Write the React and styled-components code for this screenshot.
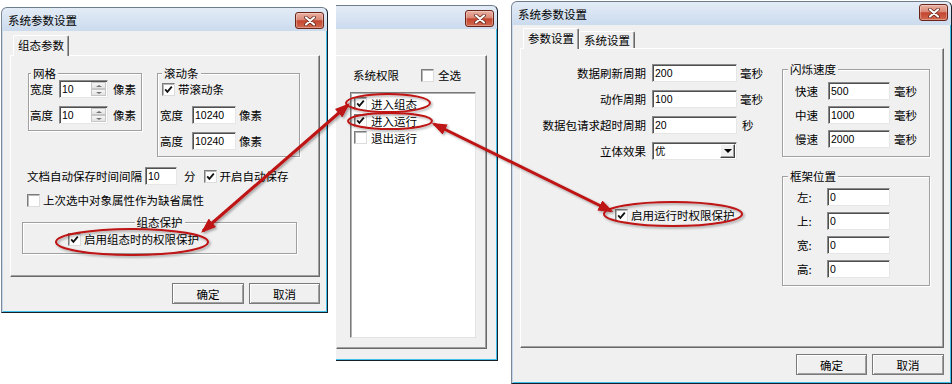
import React from 'react';
import styled, { createGlobalStyle } from 'styled-components';

const GlobalStyle = createGlobalStyle`
  html, body { margin: 0; padding: 0; background: #fff; }
  body {
    font-family: "Noto Sans CJK SC", "Liberation Sans", sans-serif;
    font-size: 11.5px;
    line-height: 18px;
    color: #000;
  }
`;

const Desktop = styled.div`
  position: relative;
  width: 952px;
  height: 384px;
  overflow: hidden;
  display: flex;
  align-items: flex-start;
`;

const Win = styled.div`
  box-sizing: border-box;
  flex: none;
  width: ${p => p.$w}px;
  height: ${p => p.$h}px;
  margin: ${p => p.$top}px 0 0 ${p => p.$left}px;
  display: flex;
  flex-direction: column;
  border: 1px solid #16202a;
  border-top-color: #6e7d8d;
  border-left: ${p => (p.$cut ? 'none' : '1px solid #7d8996')};
  border-radius: ${p => (p.$cut ? '0 6px 0 0' : '6px 6px 0 0')};
  padding-left: ${p => (p.$cut ? 0 : 1)}px;
  background: linear-gradient(#e3ecf6, #cbdbee 23px, #c4d6eb);
`;

const TitleBar = styled.div`
  height: 23px;
  flex: none;
  display: flex;
  align-items: flex-start;
  justify-content: space-between;
  padding: 0 3px 0 5px;
`;

const Title = styled.span`
  margin-top: 4px;
  line-height: 16px;
  white-space: nowrap;
`;

const CloseBtn = styled.div`
  box-sizing: border-box;
  width: 29px;
  height: 17px;
  margin-top: ${p => p.$mt ?? 2}px;
  margin-left: auto;
  border: 1px solid #6a2317;
  border-radius: 3px;
  background: linear-gradient(#eab0a3, #d98a78 45%, #c4452f 52%, #d16a50);
  box-shadow: inset 0 0 0 1px rgba(255, 255, 255, 0.3);
  display: flex;
  align-items: center;
  justify-content: center;
`;

const Body = styled.div`
  flex: 1;
  display: flex;
  flex-direction: column;
  background: #f0f0f0;
  border-right: 1px solid #3fbfea;
  border-bottom: 1px solid #3fbfea;
  padding: ${p => p.$pad};
`;

const Tabs = styled.div`
  height: 20px;
  display: flex;
  align-items: flex-end;
  margin-left: 3px;
  position: relative;
  z-index: 1;
`;

const Tab = styled.div`
  box-sizing: border-box;
  height: ${p => (p.$active ? 21 : 17)}px;
  margin-bottom: ${p => (p.$active ? -1 : 0)}px;
  padding: 0 4px;
  line-height: ${p => (p.$active ? 19 : 16)}px;
  background: #f0f0f0;
  border: 1px solid;
  border-color: #fff #696969 transparent #fff;
  border-bottom: none;
  border-radius: 2px 2px 0 0;
  box-shadow: inset -1px 0 0 #a0a0a0;
  white-space: nowrap;
`;

const Panel = styled.div`
  box-sizing: border-box;
  height: ${p => p.$h}px;
  flex: none;
  display: flex;
  flex-direction: ${p => p.$row ? 'row' : 'column'};
  align-items: flex-start;
  border: 1px solid;
  border-color: #fff #696969 #696969 ${p => (p.$cut ? 'transparent' : '#fff')};
  box-shadow: inset -1px -1px 0 #a0a0a0;
`;

const ButtonRow = styled.div`
  display: flex;
  justify-content: flex-end;
  gap: 5px;
  margin-top: 6px;
`;

const Button = styled.div`
  box-sizing: border-box;
  width: ${p => p.$w}px;
  height: 21px;
  border: 1px solid #7a7a7a;
  box-shadow: inset 1px 1px 0 #fff, inset -1px -1px 0 #a0a0a0;
  background: #f0f0f0;
  display: flex;
  align-items: center;
  justify-content: center;
  line-height: 16px;
`;

const GroupBox = styled.div`
  box-sizing: border-box;
  position: relative;
  flex: none;
  width: ${p => p.$w}px;
  margin: ${p => p.$m || 0};
  padding: ${p => p.$pad};
  border: 1px solid #a0a0a0;
  box-shadow: inset 1px 1px 0 #fff, 1px 1px 0 #fff;
  display: flex;
  flex-direction: column;
  gap: ${p => p.$gap || 0}px;
`;

const Caption = styled.span`
  position: absolute;
  top: -9px;
  left: ${p => (p.$center ? '50%' : `${p.$left ?? 2}px`)};
  transform: ${p => (p.$center ? 'translateX(-50%)' : 'none')};
  padding: 0 2px;
  line-height: 16px;
  background: #f0f0f0;
  white-space: nowrap;
`;

const Row = styled.div`
  display: flex;
  align-items: center;
  height: ${p => p.$h || 18}px;
  margin: ${p => p.$m || 0};
  white-space: nowrap;
`;

const Label = styled.span`
  flex: none;
  width: ${p => (p.$w ? `${p.$w}px` : 'auto')};
  margin-left: ${p => p.$ml || 0}px;
  text-align: ${p => p.$align || 'left'};
  white-space: nowrap;
`;

const Field = styled.div`
  box-sizing: border-box;
  flex: none;
  width: ${p => p.$w}px;
  height: 18px;
  margin-left: ${p => p.$ml || 0}px;
  display: flex;
  align-items: center;
  justify-content: space-between;
  padding-left: 2px;
  background: #fff;
  border: 1px solid;
  border-color: #8a8a8a #e6e6e6 #e6e6e6 #8a8a8a;
  box-shadow: inset 1px 1px 0 #505050;
  font-family: "Liberation Sans", "Noto Sans CJK SC", sans-serif;
  font-size: 10.5px;
`;

const Spinner = styled.div`
  width: 15px;
  height: 14px;
  margin-right: 1px;
  display: flex;
  flex-direction: column;
`;

const SpinHalf = styled.div`
  flex: 1;
  display: flex;
  align-items: center;
  justify-content: center;
  background: linear-gradient(#f6f6f6, #e2e2e2);
  border: 1px solid #c6c6c6;
  &::after {
    content: '';
    border-left: 3px solid transparent;
    border-right: 3px solid transparent;
    ${p => (p.$down ? 'border-top' : 'border-bottom')}: 2px solid #707070;
  }
`;

const DropBtn = styled.div`
  box-sizing: border-box;
  width: 15px;
  height: 14px;
  margin-right: 1px;
  background: #f0f0f0;
  border: 1px solid;
  border-color: #fff #404040 #404040 #fff;
  box-shadow: inset -1px -1px 0 #a0a0a0;
  display: flex;
  align-items: center;
  justify-content: center;
  &::after {
    content: '';
    border-left: 4px solid transparent;
    border-right: 4px solid transparent;
    border-top: 4px solid #000;
  }
`;

const Box = styled.span`
  box-sizing: border-box;
  flex: none;
  width: 13px;
  height: 13px;
  margin-left: ${p => p.$ml || 0}px;
  background: #fff;
  border: 1px solid;
  border-color: #7c7c7c #dcdcdc #dcdcdc #7c7c7c;
  box-shadow: inset 1px 1px 0 #b8b8b8;
  display: flex;
  align-items: center;
  justify-content: center;
`;

const GroupsRow = styled.div`
  display: flex;
  align-items: flex-start;
  gap: 15px;
  margin: 17px 0 0 17px;
`;

const ListBox = styled.div`
  box-sizing: border-box;
  width: 126px;
  height: 246px;
  margin: 8px 0 0 13px;
  padding: 2px 0 0 3px;
  background: #fff;
  border: 1px solid;
  border-color: #7a7a7a #e3e3e3 #e3e3e3 #7a7a7a;
  box-shadow: inset 1px 1px 0 #b0b0b0;
`;

const Col = styled.div`
  flex: none;
  width: ${p => p.$w}px;
  display: flex;
  flex-direction: column;
  margin-top: ${p => p.$mt || 0}px;
  gap: ${p => p.$gap || 0}px;
`;

const Overlay = styled.svg`
  position: absolute;
  left: 0;
  top: 0;
  pointer-events: none;
`;

function Close({ mt }) {
  return (
    <CloseBtn $mt={mt}>
      <svg width="12" height="10" viewBox="0 0 12 10">
        <path d="M2 1.5 L10 8.5 M10 1.5 L2 8.5" stroke="#5a1e14" strokeWidth="3.6" strokeLinecap="round" />
        <path d="M2 1.5 L10 8.5 M10 1.5 L2 8.5" stroke="#fff" strokeWidth="2.2" strokeLinecap="round" />
      </svg>
    </CloseBtn>
  );
}

function Check({ on, ml }) {
  return (
    <Box $ml={ml}>
      {on && (
        <svg width="9" height="9" viewBox="0 0 9 9">
          <polyline points="1.2,4.3 3.4,6.8 7.8,1.6" fill="none" stroke="#111" strokeWidth="1.8" />
        </svg>
      )}
    </Box>
  );
}

function SpinField({ w, ml, value }) {
  return (
    <Field $w={w} $ml={ml}>
      <span>{value}</span>
      <Spinner>
        <SpinHalf />
        <SpinHalf $down />
      </Spinner>
    </Field>
  );
}

function Dialog1() {
  return (
    <Win $w={327} $h={306} $top={7} $left={1}>
      <TitleBar>
        <Title>系统参数设置</Title>
        <Close mt={4} />
      </TitleBar>
      <Body $pad="4px 6px 0 7px">
        <Tabs>
          <Tab $active>组态参数</Tab>
        </Tabs>
        <Panel $h={222}>
          <GroupsRow>
            <GroupBox $w={114} $pad="6px 0 6px 1px" $gap={8}>
              <Caption>网格</Caption>
              <Row>
                <Label>宽度</Label>
                <SpinField w={49} ml={6} value="10" />
                <Label $ml={5}>像素</Label>
              </Row>
              <Row>
                <Label>高度</Label>
                <SpinField w={49} ml={6} value="10" />
                <Label $ml={5}>像素</Label>
              </Row>
            </GroupBox>
            <GroupBox $w={143} $pad="6px 0 6px 2px" $gap={8}>
              <Caption $left={4}>滚动条</Caption>
              <Row>
                <Check on ml={2} />
                <Label $ml={3}>带滚动条</Label>
              </Row>
              <Row>
                <Label>宽度</Label>
                <Field $w={44} $ml={9}>10240</Field>
                <Label $ml={3}>像素</Label>
              </Row>
              <Row>
                <Label>高度</Label>
                <Field $w={44} $ml={9}>10240</Field>
                <Label $ml={3}>像素</Label>
              </Row>
            </GroupBox>
          </GroupsRow>
          <Row $m="10px 0 0 16px">
            <Label>文档自动保存时间间隔</Label>
            <Field $w={32} $ml={3}>10</Field>
            <Label $ml={7}>分</Label>
            <Check on ml={8} />
            <Label $ml={3}>开启自动保存</Label>
          </Row>
          <Row $m="6px 0 0 16px">
            <Check />
            <Label $ml={3}>上次选中对象属性作为缺省属性</Label>
          </Row>
          <GroupBox $w={275} $m="13px 0 0 11px" $pad="7px 0 5px 45px">
            <Caption $center>组态保护</Caption>
            <Row>
              <Check on />
              <Label $ml={3}>启用组态时的权限保护</Label>
            </Row>
          </GroupBox>
        </Panel>
        <ButtonRow>
          <Button $w={72}>确定</Button>
          <Button $w={71}>取消</Button>
        </ButtonRow>
      </Body>
    </Win>
  );
}

function Dialog2() {
  const items = [
    ['进入组态', true],
    ['进入运行', true],
    ['退出运行', false],
  ];
  return (
    <Win $w={162} $h={356} $top={5} $left={8} $cut>
      <TitleBar>
        <Close mt={4} />
      </TitleBar>
      <Body $pad="26px 9px 0 0">
        <Panel $h={294} $cut>
          <Row $m="10px 0 0 16px">
            <Label>系统权限</Label>
            <Check ml={22} />
            <Label $ml={4}>全选</Label>
          </Row>
          <ListBox>
            {items.map(([t, on]) => (
              <Row key={t} $h={17}>
                <Check on={on} />
                <Label $ml={4}>{t}</Label>
              </Row>
            ))}
          </ListBox>
        </Panel>
      </Body>
    </Win>
  );
}

function Dialog3() {
  const form = [
    ['数据刷新周期', '200', '毫秒'],
    ['动作周期', '100', '毫秒'],
    ['数据包请求超时周期', '20', '秒'],
  ];
  const speeds = [
    ['快速', '500'],
    ['中速', '1000'],
    ['慢速', '2000'],
  ];
  return (
    <Win $w={441} $h={383} $top={1} $left={13}>
      <TitleBar>
        <Title>系统参数设置</Title>
        <Close mt={2} />
      </TitleBar>
      <Body $pad="3px 6px 0 7px">
        <Tabs>
          <Tab $active>参数设置</Tab>
          <Tab>系统设置</Tab>
        </Tabs>
        <Panel $h={300} $row>
          <Col $w={261} $mt={15} $gap={8}>
            {form.map(([l, v, u]) => (
              <Row key={l}>
                <Label $w={125} $align="right">{l}</Label>
                <Field $w={85} $ml={6}>{v}</Field>
                <Label $ml={u === '秒' ? 5 : 3}>{u}</Label>
              </Row>
            ))}
            <Row>
              <Label $w={125} $align="right">立体效果</Label>
              <Field $w={85} $ml={6}>
                <span>优</span>
                <DropBtn />
              </Field>
            </Row>
            <Row $m="38px 0 0 94px">
              <Check on />
              <Label $ml={3}>启用运行时权限保护</Label>
            </Row>
          </Col>
          <Col $w={148} $mt={20}>
            <GroupBox $w={148} $pad="12px 0 8px 12px" $gap={6}>
              <Caption $left={5}>闪烁速度</Caption>
              {speeds.map(([l, v]) => (
                <Row key={l}>
                  <Label $w={33}>{l}</Label>
                  <Field $w={62}>{v}</Field>
                  <Label $ml={4}>毫秒</Label>
                </Row>
              ))}
            </GroupBox>
            <GroupBox $w={148} $m="19px 0 0 0" $pad="11px 0 7px 14px" $gap={6}>
              <Caption $left={5}>框架位置</Caption>
              {['左', '上', '宽', '高'].map(l => (
                <Row key={l}>
                  <Label $w={30}>{l}:</Label>
                  <Field $w={63}>0</Field>
                </Row>
              ))}
            </GroupBox>
          </Col>
        </Panel>
        <ButtonRow>
          <Button $w={71}>确定</Button>
          <Button $w={72}>取消</Button>
        </ButtonRow>
      </Body>
    </Win>
  );
}

function Annotations() {
  const red = '#be1212';
  return (
    <Overlay width="952" height="384" viewBox="0 0 952 384">
      <defs>
        <filter id="sh" x="-20%" y="-20%" width="140%" height="140%">
          <feDropShadow dx="1.5" dy="1.5" stdDeviation="1" floodColor="#000" floodOpacity="0.35" />
        </filter>
        <marker id="ah" viewBox="0 0 12 9" refX="10" refY="4.5" markerWidth="5" markerHeight="3.75" orient="auto-start-reverse">
          <path d="M0 0 L12 4.5 L0 9 Z" fill={red} />
        </marker>
      </defs>
      <g filter="url(#sh)" fill="none" stroke={red}>
        <ellipse cx="132" cy="242" rx="76" ry="13" strokeWidth="2" />
        <ellipse cx="388" cy="103" rx="42" ry="9" strokeWidth="2" />
        <ellipse cx="390" cy="121" rx="42" ry="8" strokeWidth="2" />
        <ellipse cx="673" cy="214" rx="69" ry="12" strokeWidth="2" />
        <line x1="348" y1="105" x2="203" y2="231" strokeWidth="3" markerStart="url(#ah)" markerEnd="url(#ah)" />
        <line x1="434" y1="124" x2="611" y2="211" strokeWidth="3" markerStart="url(#ah)" markerEnd="url(#ah)" />
      </g>
    </Overlay>
  );
}

export default function App() {
  return (
    <>
      <GlobalStyle />
      <Desktop>
        <Dialog1 />
        <Dialog2 />
        <Dialog3 />
        <Annotations />
      </Desktop>
    </>
  );
}
